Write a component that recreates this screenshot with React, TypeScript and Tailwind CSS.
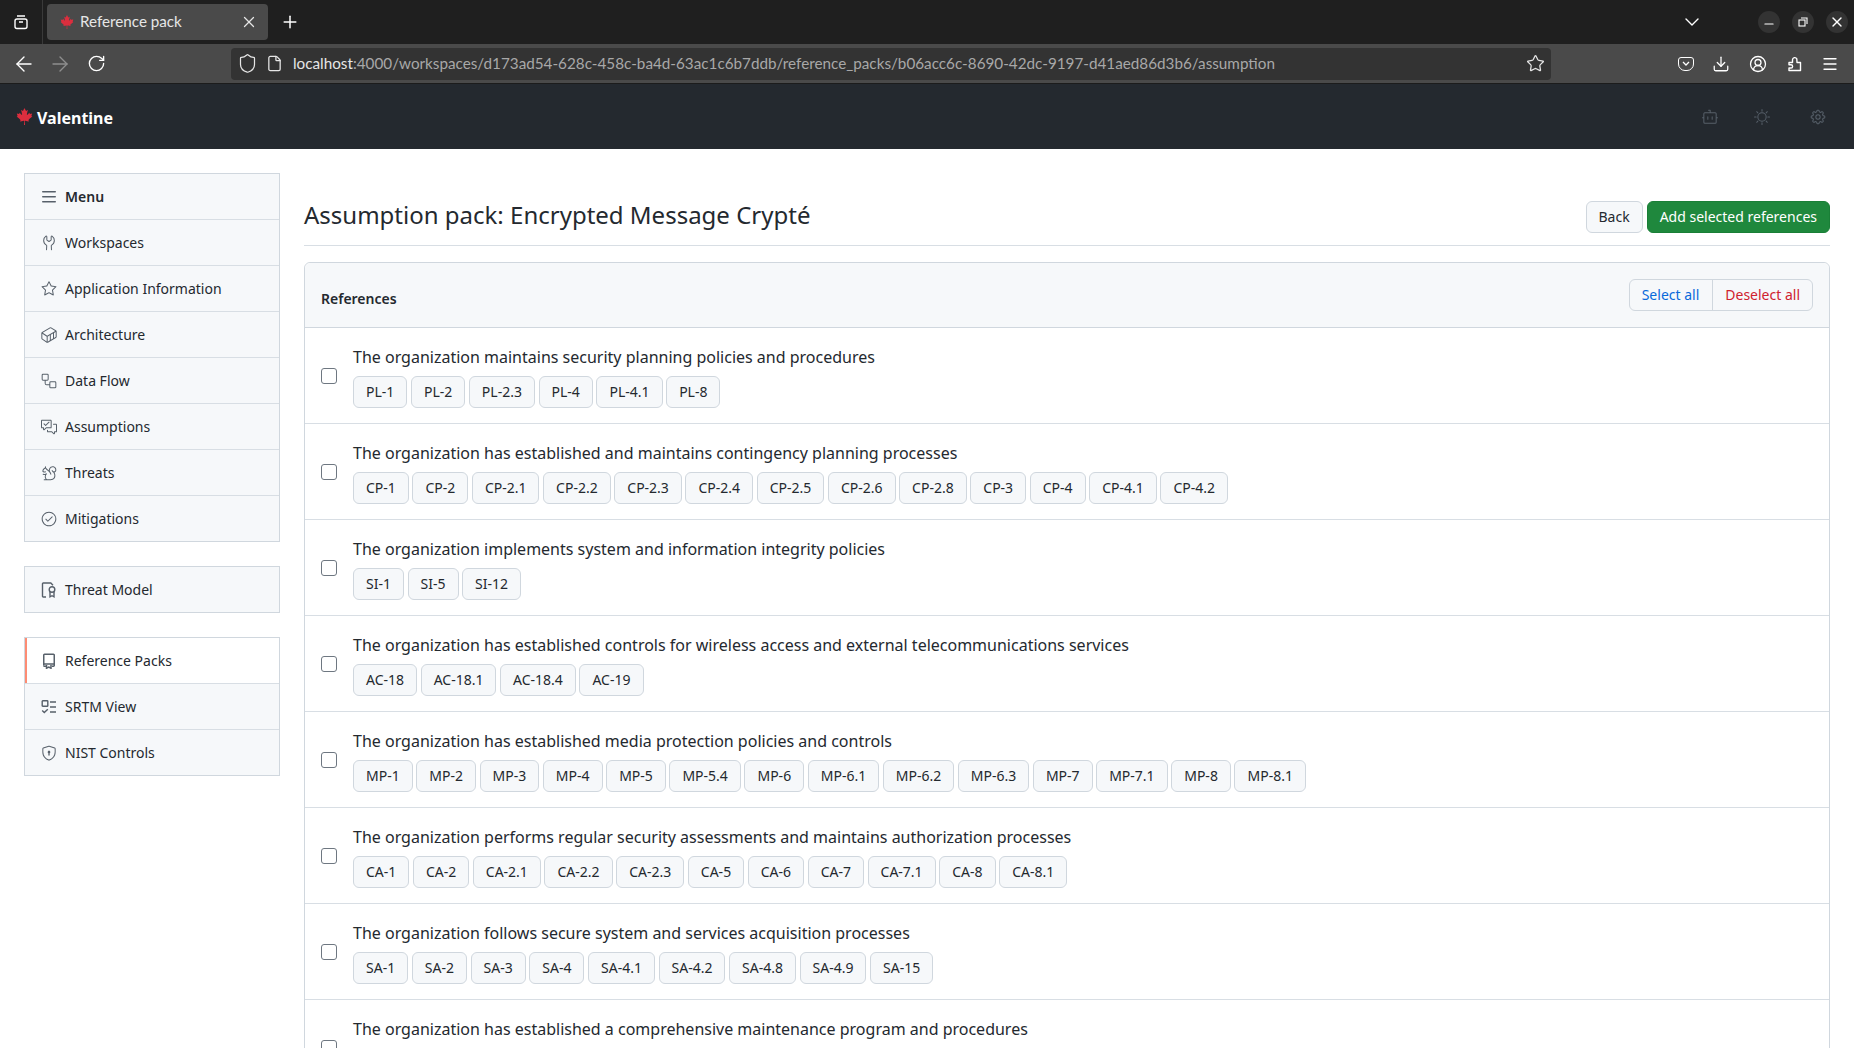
import type { ComponentType } from "react";
import { ArrowLeft, ArrowRight, ChevronDown, CircleUserRound, Download, File, Menu, Minus, Plus, RotateCw, Shield, Star, X } from "lucide-react";
import { FaCanadianMapleLeaf } from "react-icons/fa";
import {
  GoCheckCircle, GoContainer, GoDependabot, GoDiscussionClosed, GoGear, GoShieldLock,
  GoSquirrel, GoStar, GoSun, GoTools, GoWorkflow,
} from "react-icons/go";

type IconProps = { className?: string };

function ThreeBars({ className }: IconProps) {
  return (
    <svg className={className} viewBox="0 0 16 16" fill="currentColor">
      <path d="M1 2.75A.75.75 0 0 1 1.75 2h12.5a.75.75 0 0 1 0 1.5H1.75A.75.75 0 0 1 1 2.75Zm0 5A.75.75 0 0 1 1.75 7h12.5a.75.75 0 0 1 0 1.5H1.75A.75.75 0 0 1 1 7.75ZM1.75 12h12.5a.75.75 0 0 1 0 1.5H1.75a.75.75 0 0 1 0-1.5Z" />
    </svg>
  );
}

function FileBadge({ className }: IconProps) {
  return (
    <svg className={className} viewBox="0 0 16 16" fill="none" stroke="currentColor" strokeWidth="1.4">
      <path d="M5 15H2.2a.7.7 0 0 1-.7-.7V1.7a.7.7 0 0 1 .7-.7h7.6l2.2 2.2" />
      <circle cx="11" cy="7.5" r="2.8" />
      <path d="M9 10v4.8l2-1.1 2 1.1V10" />
    </svg>
  );
}

function PackIcon({ className }: IconProps) {
  return (
    <svg className={className} viewBox="0 0 16 16" fill="none" stroke="currentColor" strokeWidth="1.5">
      <path d="M2.75 12.5V2a.75.75 0 0 1 .75-.75h9a.75.75 0 0 1 .75.75v10.5a.75.75 0 0 1-.75.75h-1.5" />
      <path d="M2.75 12.5c0 .4.3.75.75.75H5M2.75 11h10.5" />
      <path d="M5.5 12v3.25l2.25-1.2 2.25 1.2V12" />
    </svg>
  );
}

function TaskIcon({ className }: IconProps) {
  return (
    <svg className={className} viewBox="0 0 16 16" fill="none" stroke="currentColor" strokeWidth="1.4">
      <rect x="1.2" y="1.7" width="5.6" height="5.6" rx="0.6" />
      <path d="M9 3h6M9 8h6M9 13h6" />
      <path d="M1.2 11.4l2.1 2.1 3.5-3.3" />
    </svg>
  );
}

const MAIN_MENU = [
  { label: "Workspaces", icon: GoTools },
  { label: "Application Information", icon: GoStar },
  { label: "Architecture", icon: GoContainer },
  { label: "Data Flow", icon: GoWorkflow },
  { label: "Assumptions", icon: GoDiscussionClosed },
  { label: "Threats", icon: GoSquirrel },
  { label: "Mitigations", icon: GoCheckCircle },
];

const REFERENCES = [
  { title: "The organization maintains security planning policies and procedures", tags: ["PL-1", "PL-2", "PL-2.3", "PL-4", "PL-4.1", "PL-8"] },
  { title: "The organization has established and maintains contingency planning processes", tags: ["CP-1", "CP-2", "CP-2.1", "CP-2.2", "CP-2.3", "CP-2.4", "CP-2.5", "CP-2.6", "CP-2.8", "CP-3", "CP-4", "CP-4.1", "CP-4.2"] },
  { title: "The organization implements system and information integrity policies", tags: ["SI-1", "SI-5", "SI-12"] },
  { title: "The organization has established controls for wireless access and external telecommunications services", tags: ["AC-18", "AC-18.1", "AC-18.4", "AC-19"] },
  { title: "The organization has established media protection policies and controls", tags: ["MP-1", "MP-2", "MP-3", "MP-4", "MP-5", "MP-5.4", "MP-6", "MP-6.1", "MP-6.2", "MP-6.3", "MP-7", "MP-7.1", "MP-8", "MP-8.1"] },
  { title: "The organization performs regular security assessments and maintains authorization processes", tags: ["CA-1", "CA-2", "CA-2.1", "CA-2.2", "CA-2.3", "CA-5", "CA-6", "CA-7", "CA-7.1", "CA-8", "CA-8.1"] },
  { title: "The organization follows secure system and services acquisition processes", tags: ["SA-1", "SA-2", "SA-3", "SA-4", "SA-4.1", "SA-4.2", "SA-4.8", "SA-4.9", "SA-15"] },
  // tags of this last row fall below the fold
  { title: "The organization has established a comprehensive maintenance program and procedures", tags: [] },
];

function BrowserChrome() {
  return (
    <div className="font-['Lato',sans-serif] text-white">
      <div className="h-[44px] bg-[#1f1f1f] flex items-center">
        <div className="w-[43px] h-full flex items-center justify-center border-r border-[#3a3a3a]">
          <svg width="16" height="16" viewBox="0 0 16 16" fill="none" stroke="white" strokeWidth="1.4">
            <rect x="2" y="5" width="12" height="9.5" rx="2" />
            <path d="M4 2h8M6 8h4" />
          </svg>
        </div>
        <div className="ml-[4px] w-[221px] h-[36px] bg-[#4a4a4a] rounded-[4px] flex items-center pl-[13px] pr-[10px]">
          <FaCanadianMapleLeaf className="text-[#dc2e3e] w-[14px] h-[14px] mr-[6px]" />
          <span className="mb-[2px] text-[15.2px] text-[#e6e6e6]">Reference pack</span>
          <X className="ml-auto w-[18px] h-[18px] text-[#e6e6e6]" strokeWidth={1.7} />
        </div>
        <Plus className="ml-[12px] w-[20px] h-[20px]" strokeWidth={1.8} />
        <ChevronDown className="ml-auto mr-[54px] w-[24px] h-[24px]" strokeWidth={1.4} />
        <div className="flex gap-[12px] mr-[6px]">
          <div className="w-[22px] h-[22px] rounded-full bg-[#333] flex items-center justify-center"><Minus className="mt-[3px] w-[14px] h-[14px]" strokeWidth={2} /></div>
          <div className="w-[22px] h-[22px] rounded-full bg-[#333] flex items-center justify-center">
            <svg width="10" height="10" viewBox="0 0 10 10" fill="none" stroke="white" strokeWidth="1.1">
              <rect x="1" y="3" width="6" height="6" />
              <path d="M3 1h6v6" />
            </svg>
          </div>
          <div className="w-[22px] h-[22px] rounded-full bg-[#333] flex items-center justify-center"><X className="w-[16px] h-[16px]" strokeWidth={2} /></div>
        </div>
      </div>
      <div className="h-[40px] bg-[#4a4a4a] border-b border-[#1c1c1c] flex items-center">
        <ArrowLeft className="ml-[12px] w-[24px] h-[24px]" strokeWidth={1.4} />
        <ArrowRight className="ml-[12px] w-[24px] h-[24px] text-[#8e8e8e]" strokeWidth={1.4} />
        <RotateCw className="ml-[14.5px] w-[19px] h-[19px]" strokeWidth={1.7} />
        <div className="ml-[125.5px] w-[1320px] h-[32px] bg-[#333] rounded-[4px] flex items-center pl-[5.5px] pr-[6.5px]">
          <Shield className="w-[21px] h-[21px] text-[#e6e6e6]" strokeWidth={1.4} />
          <File className="ml-[8px] w-[17px] h-[17px] text-[#e6e6e6]" strokeWidth={1.8} />
          <span className="ml-[10.5px] text-[15.25px] text-[#e6e6e6] whitespace-nowrap">
            localhost<span className="text-[#a8a8a8]">:4000/workspaces/d173ad54-628c-458c-ba4d-63ac1c6b7ddb/reference_packs/b06acc6c-8690-42dc-9197-d41aed86d3b6/assumption</span>
          </span>
          <Star className="ml-auto w-[19px] h-[19px] text-[#e6e6e6]" strokeWidth={1.6} />
        </div>
        <div className="ml-[127px] w-[16px] h-[14px] border-[1.5px] border-white rounded-[3px] rounded-b-[7px] flex items-center justify-center">
          <svg width="8" height="5" viewBox="0 0 8 5" fill="none" stroke="white" strokeWidth="1.3"><path d="M1 1l3 3 3-3" /></svg>
        </div>
        <Download className="ml-[18px] w-[18px] h-[18px]" strokeWidth={1.7} />
        <CircleUserRound className="ml-[19px] w-[18px] h-[18px]" strokeWidth={1.7} />
        <svg className="ml-[20px] w-[16px] h-[16px]" viewBox="0 0 16 16" fill="none" stroke="white" strokeWidth="1.4" strokeLinejoin="round">
          <path d="M2 6.5h3.5V3.8a2.3 2.3 0 0 1 4.3-1l.2 3.7h3.5v8H2v-2.5h2a1.6 1.6 0 0 0 0-3.2H2z" />
        </svg>
        <Menu className="ml-[18px] w-[18px] h-[18px]" strokeWidth={1.7} />
      </div>
    </div>
  );
}

function SideItem({ label, icon: Icon, active }: { label: string; icon: ComponentType<IconProps>; active?: boolean }) {
  return (
    <div className={`relative h-[46px] flex items-center pl-[16px] border-b border-[#d8dee4] last:h-[45px] last:border-b-0 text-[14px] ${active ? "bg-white" : "bg-[#f6f8fa]"}`}>
      {active && <div className="absolute left-0 top-0 bottom-0 w-[2px] bg-[#fd8c73]" />}
      <Icon className="w-[16px] h-[16px] text-[#57606a]" />
      <span className="ml-[8px] text-[#24292f]">{label}</span>
    </div>
  );
}

function Sidebar() {
  return (
    <div className="w-[256px] shrink-0 flex flex-col gap-[24px]">
      <div className="border border-[#d0d7de]">
        <div className="h-[46px] flex items-center pl-[16px] bg-[#f6f8fa] border-b border-[#d8dee4] text-[14px] font-semibold text-[#24292f]">
          <ThreeBars className="w-[16px] h-[16px] text-[#57606a]" />
          <span className="ml-[8px]">Menu</span>
        </div>
        {MAIN_MENU.map(m => <SideItem key={m.label} label={m.label} icon={m.icon} />)}
      </div>
      <div className="border border-[#d0d7de]">
        <SideItem label="Threat Model" icon={FileBadge} />
      </div>
      <div className="border border-[#d0d7de]">
        <SideItem label="Reference Packs" icon={PackIcon} active />
        <SideItem label="SRTM View" icon={TaskIcon} />
        <SideItem label="NIST Controls" icon={GoShieldLock} />
      </div>
    </div>
  );
}

function ReferenceRow({ title, tags }: { title: string; tags: string[] }) {
  return (
    <div className="h-[96px] flex items-center pl-[16px] border-b border-[#d8dee4]">
      <div className="w-[16px] h-[16px] rounded-[3px] border border-[#6e7781] bg-white shrink-0 mr-[16px]" />
      <div>
        <div className="mt-[1px] text-[16px] leading-[24px] text-[#24292f] mb-[7px]">{title}</div>
        <div className="flex h-[32px] gap-[3.6px]">
          {tags.map(t => (
            <span key={t} className="h-[32px] flex items-center px-[12px] rounded-[6px] border border-[#d0d7de] bg-[#f6f8fa] text-[14px] text-[#24292f]">{t}</span>
          ))}
        </div>
      </div>
    </div>
  );
}

export default function App() {
  return (
    <div className="h-screen overflow-hidden bg-white font-['Noto_Sans',sans-serif]">
      <BrowserChrome />

      <div className="h-[65px] bg-[#24292f] flex items-center pl-[16px]">
        <FaCanadianMapleLeaf className="w-[17px] h-[17px] text-[#dc2e3e]" />
        <span className="ml-[4px] mt-[2px] text-[16px] font-bold text-white">Valentine</span>
        <div className="ml-auto flex items-center mr-[28px] text-[#57606a]">
          <GoDependabot className="w-[16px] h-[16px]" />
          <GoSun className="ml-[36px] w-[16px] h-[16px]" />
          <GoGear className="ml-[40px] w-[16px] h-[16px]" />
        </div>
      </div>

      <div className="flex gap-[24px] px-[24px] pt-[24px]">
        <Sidebar />
        <div className="flex-1 min-w-0">
          <div className="h-[73px] pt-[16px] flex items-center border-b border-[#d8dee4] mb-[16px]">
            <h1 className="mb-[4px] text-[24px] text-[#24292f]">Assumption pack: Encrypted Message Crypté</h1>
            <button className="ml-auto h-[32px] px-[12px] pb-[2px] rounded-[6px] border border-[#d0d7de] bg-[#f6f8fa] text-[14px] text-[#24292f]">Back</button>
            <button className="ml-[4px] h-[32px] px-[12px] pb-[2px] rounded-[6px] border border-[#1a7f37] bg-[#1f883d] text-[14px] text-white">Add selected references</button>
          </div>
          <div className="border border-[#d0d7de] rounded-t-[6px]">
            <div className="h-[65px] flex items-center pl-[16px] pr-[16px] bg-[#f6f8fa] border-b border-[#d0d7de] rounded-t-[6px]">
              <span className="mt-[6px] text-[14px] font-semibold text-[#24292f]">References</span>
              <div className="ml-auto flex h-[32px] rounded-[6px] border border-[#d0d7de] text-[14px]">
                <button className="pl-[12px] pr-[13px] pb-[2px] text-[#0969da] border-r border-[#d0d7de]">Select all</button>
                <button className="px-[12px] pb-[2px] text-[#cf222e]">Deselect all</button>
              </div>
            </div>
            {REFERENCES.map(r => <ReferenceRow key={r.title} title={r.title} tags={r.tags} />)}
          </div>
        </div>
      </div>
    </div>
  );
}
